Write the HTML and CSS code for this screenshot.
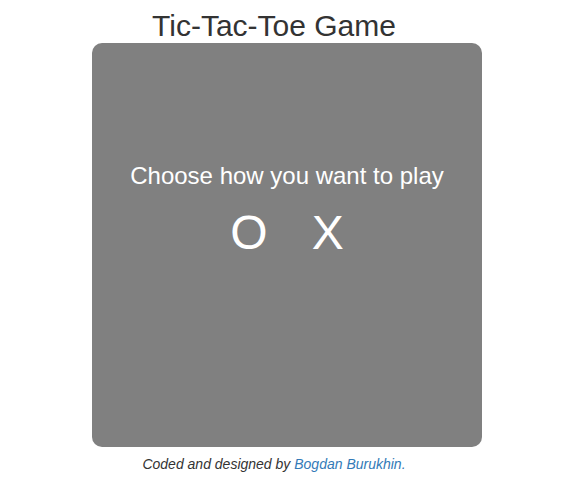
FILE: index.html
```html
<!DOCTYPE html>
<html>
<head>
<meta charset="utf-8">
<link rel="stylesheet" href="styles.css">
</head>
<body>
<div class="page">
  <h1 class="title">Tic-Tac-Toe Game</h1>
  <div class="board">
    <p class="choose">Choose how you want to play</p>
    <div class="options">
      <span class="opt">O</span>
      <span class="opt">X</span>
    </div>
  </div>
  <p class="footer">Coded and designed by <a href="#">Bogdan Burukhin.</a></p>
</div>
</body>
</html>
```
FILE: styles.css
```css
html, body { margin: 0; padding: 0; background: #fff; }
body { font-family: "Liberation Sans", Arial, sans-serif; color: #333; }
.page { display: flex; flex-direction: column; align-items: center; }
.title {
  margin: 8px 0 0 0;
  padding-right: 26px;
  font-size: 30px;
  font-weight: 400;
  line-height: 35px;
  height: 35px;
  color: #333;
}
.board {
  width: 390px;
  height: 404px;
  background: #808080;
  border-radius: 10px;
  color: #fff;
  text-align: center;
  box-sizing: border-box;
  padding-top: 117px;
}
.choose { margin: 0; font-size: 24px; line-height: 32px; }
.options {
  display: flex;
  justify-content: center;
  gap: 44px;
  margin-top: 13px;
}
.opt { font-size: 48px; line-height: 56px; }
.footer {
  margin: 7px 0 0 0;
  padding-right: 26px;
  font-size: 14px;
  font-style: italic;
  line-height: 20px;
}
.footer a { color: #337ab7; text-decoration: none; }
```
